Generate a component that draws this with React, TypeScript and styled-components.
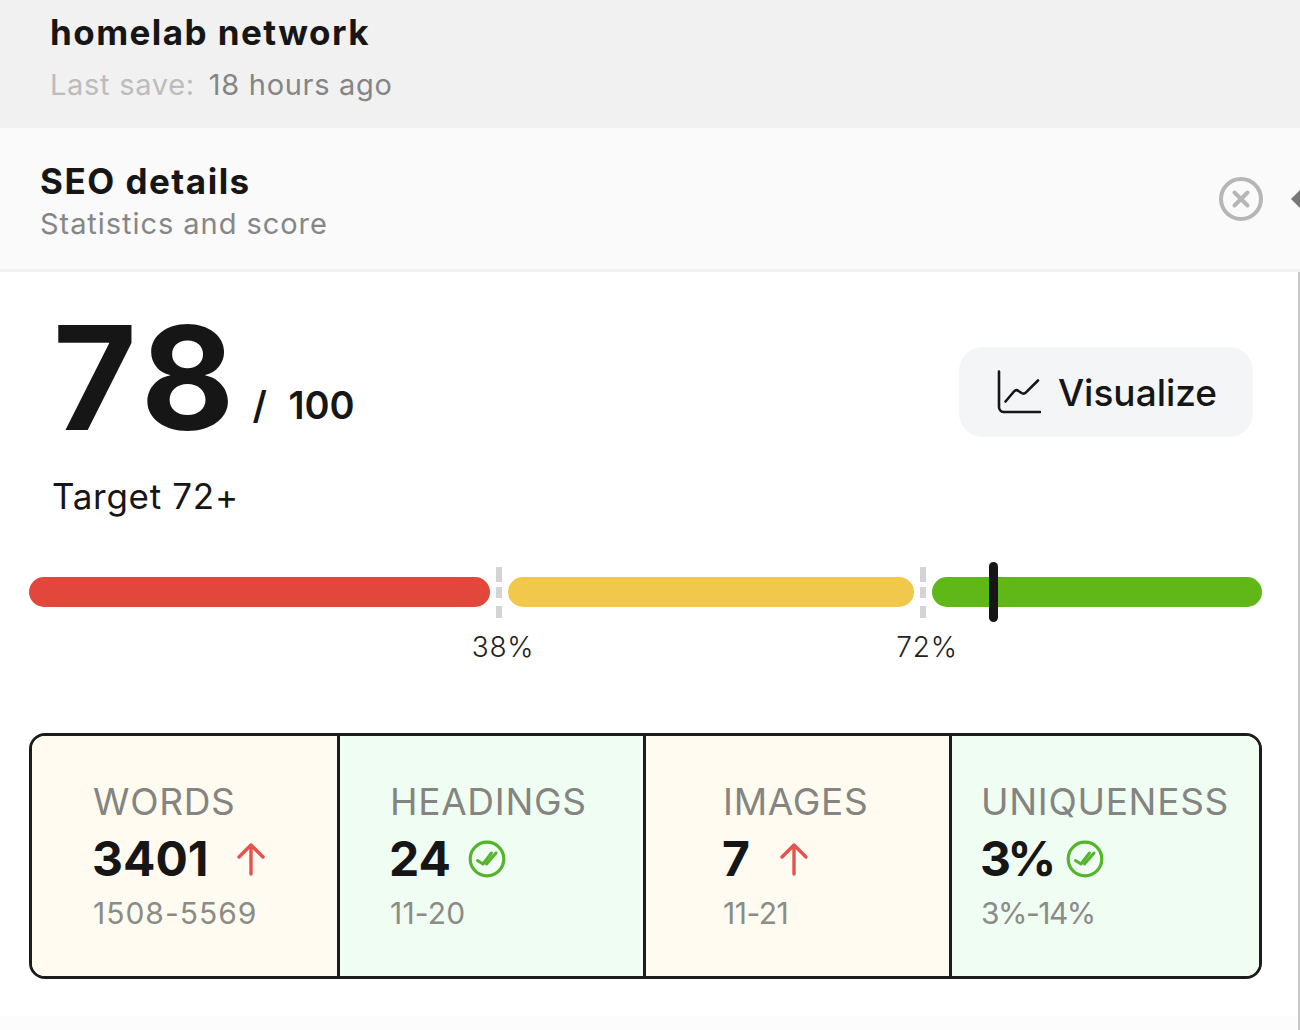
import * as React from "react";
import styled, { createGlobalStyle } from "styled-components";

const GlobalStyle = createGlobalStyle`
  html, body {
    margin: 0;
    padding: 0;
    background: #ffffff;
    font-family: "Inter", "Liberation Sans", sans-serif;
    color: #161616;
  }
`;

const UpArrow: React.FC = () => (
  <svg width="30" height="34" viewBox="0 0 30 34" fill="none">
    <path d="M15 32V3M3 15 15 3l12 12" stroke="#e5534f" strokeWidth="3.4" strokeLinecap="round" strokeLinejoin="round" />
  </svg>
);

const DoubleCheck: React.FC = () => (
  <svg width="38" height="38" viewBox="0 0 38 38" fill="none">
    <circle cx="19" cy="19" r="16.8" stroke="#54b52a" strokeWidth="3.2" />
    <path d="M9.500 20.500l5.500 3.500 8.500-11" stroke="#54b52a" strokeWidth="3" strokeLinecap="round" strokeLinejoin="round" />
    <path d="M18.500 24l9.500-11" stroke="#54b52a" strokeWidth="3" strokeLinecap="round" />
  </svg>
);

const CloseIcon: React.FC = () => (
  <svg width="46" height="46" viewBox="0 0 46 46" fill="none">
    <circle cx="23" cy="23" r="20" stroke="#b6b6b6" strokeWidth="4" />
    <path d="M16.500 16.500l13 13M29.500 16.500l-13 13" stroke="#b6b6b6" strokeWidth="4" strokeLinecap="round" />
  </svg>
);

const ChartIcon: React.FC = () => (
  <svg width="44" height="44" viewBox="0 0 44 44" fill="none">
    <path d="M2 1.500V37a5 5 0 0 0 5 5h36" stroke="#161616" strokeWidth="2.600" strokeLinecap="round" />
    <path d="M8.500 31.500l8.500-10c1.500-1.700 3-1.700 4.500-.5l3 2c1.700 1 3 .8 4.500-.7L41 10.500" stroke="#161616" strokeWidth="2.600" strokeLinecap="round" strokeLinejoin="round" />
  </svg>
);

const stats = [
  { label: "WORDS", value: "3401", range: "1508-5569", tone: "warn", pad: 61, ok: false, gap: 27, spacing: 1, tracking: 0 },
  { label: "HEADINGS", value: "24", range: "11-20", tone: "good", pad: 50, ok: true, gap: 17, spacing: 0.2, tracking: 0 },
  { label: "IMAGES", value: "7", range: "11-21", tone: "warn", pad: 77, ok: false, gap: 29, spacing: -0.5, tracking: 0 },
  { label: "UNIQUENESS", value: "3%", range: "3%-14%", tone: "good", pad: 29, ok: true, gap: 13, spacing: -1.5, tracking: -3.5 },
] as const;

export default function App() {
  return (
    <StyledPage>
      <GlobalStyle />
      <StyledTopBar>
        <StyledDocTitle>homelab network</StyledDocTitle>
        <StyledSaveLine>
          <StyledSaveLabel>Last save:</StyledSaveLabel>
          <span>18 hours ago</span>
        </StyledSaveLine>
      </StyledTopBar>

      <StyledPanelHeader>
        <div>
          <StyledPanelTitle>SEO details</StyledPanelTitle>
          <StyledPanelSubtitle>Statistics and score</StyledPanelSubtitle>
        </div>
        <StyledCloseButton>
          <CloseIcon />
        </StyledCloseButton>
        <StyledHandle />
      </StyledPanelHeader>

      <StyledPanelBody>
        <StyledScoreRow>
          <div>
            <StyledScore>
              <StyledScoreValue>78</StyledScoreValue>
              <StyledScoreMax>/ 100</StyledScoreMax>
            </StyledScore>
            <StyledTarget>Target 72+</StyledTarget>
          </div>
          <StyledVisualize>
            <ChartIcon />
            Visualize
          </StyledVisualize>
        </StyledScoreRow>

        <StyledGauge>
          <StyledSegment $color="#e3473c" $width={461} />
          <StyledTick>
            <StyledTickLabel>38%</StyledTickLabel>
          </StyledTick>
          <StyledSegment $color="#f2c84c" $width={406} />
          <StyledTick>
            <StyledTickLabel>72%</StyledTickLabel>
          </StyledTick>
          <StyledSegment $color="#5fb817" $width={330}>
            <StyledMarker />
          </StyledSegment>
        </StyledGauge>

        <StyledStats>
          {stats.map((s) => (
            <StyledStat key={s.label} $tone={s.tone} $pad={s.pad}>
              <StyledStatLabel>{s.label}</StyledStatLabel>
              <StyledStatValue $gap={s.gap} $tracking={s.tracking}>
                {s.value}
                {s.ok ? <DoubleCheck /> : <UpArrow />}
              </StyledStatValue>
              <StyledStatRange $spacing={s.spacing}>{s.range}</StyledStatRange>
            </StyledStat>
          ))}
        </StyledStats>
      </StyledPanelBody>
    </StyledPage>
  );
}

const StyledPage = styled.div`
  width: 1300px;
  height: 1030px;
  overflow: hidden;
  display: flex;
  flex-direction: column;
`;

const StyledTopBar = styled.header`
  height: 128px;
  box-sizing: border-box;
  padding: 11px 0 0 50px;
  background: #f1f1f1;
`;

const StyledDocTitle = styled.h1`
  margin: 0;
  font-size: 35px;
  line-height: 42px;
  font-weight: 700;
  letter-spacing: 1.45px;
  color: #161616;
`;

const StyledSaveLine = styled.div`
  margin-top: 14px;
  display: flex;
  gap: 14px;
  font-size: 29px;
  line-height: 36px;
  letter-spacing: 0.7px;
  color: #858585;
`;

const StyledSaveLabel = styled.span`
  color: #bcbcbc;
`;

const StyledPanelHeader = styled.div`
  position: relative;
  height: 144px;
  box-sizing: border-box;
  padding: 32px 36px 0 40px;
  display: flex;
  justify-content: space-between;
  background: #fafafa;
  border-bottom: 3px solid #f1f1f1;
`;

const StyledPanelTitle = styled.h2`
  margin: 0;
  font-size: 35px;
  line-height: 43px;
  font-weight: 700;
  letter-spacing: 1.5px;
`;

const StyledPanelSubtitle = styled.div`
  font-size: 29px;
  line-height: 42px;
  letter-spacing: 0.95px;
  color: #868686;
`;

const StyledCloseButton = styled.div`
  margin-top: 16px;
  line-height: 0;
`;

const StyledHandle = styled.span`
  position: absolute;
  right: 0;
  top: 62px;
  width: 9px;
  height: 18px;
  background: #777777;
  clip-path: polygon(0 50%, 100% 0, 100% 100%);
`;

const StyledPanelBody = styled.main`
  flex: 1;
  padding: 0 37px 0 29px;
  border-right: 2px solid #c9c9c9;
  background: linear-gradient(#ffffff calc(100% - 14px), #fcfcfc calc(100% - 14px));
`;

const StyledScoreRow = styled.div`
  height: 290px;
  padding: 36px 8px 0 24px;
  box-sizing: border-box;
  display: flex;
  justify-content: space-between;
  align-items: flex-start;
`;

const StyledScore = styled.div`
  display: flex;
  align-items: flex-end;
  gap: 12px;
`;

const StyledScoreValue = styled.span`
  font-size: 144px;
  line-height: 140px;
  font-weight: 700;
  letter-spacing: 6px;
`;

const StyledScoreMax = styled.span`
  margin-bottom: 20px;
  font-size: 38px;
  line-height: 46px;
  font-weight: 600;
  word-spacing: 12px;
`;

const StyledTarget = styled.div`
  margin-top: 27px;
  margin-left: -1px;
  font-size: 35px;
  line-height: 42px;
  letter-spacing: 0.7px;
`;

const StyledVisualize = styled.div`
  margin-top: 39px;
  width: 294px;
  height: 90px;
  box-sizing: border-box;
  padding-left: 2px;
  display: flex;
  align-items: center;
  justify-content: center;
  gap: 17px;
  background: #f3f5f7;
  border-radius: 24px;
  font-size: 37px;
  font-weight: 500;
`;

const StyledGauge = styled.div`
  width: 1233px;
  height: 60px;
  display: flex;
  align-items: center;
  gap: 6px;
`;

const StyledSegment = styled.div<{ $color: string; $width: number }>`
  position: relative;
  flex: none;
  width: ${(p) => p.$width}px;
  height: 30px;
  border-radius: 15px;
  background: ${(p) => p.$color};
`;

const StyledMarker = styled.span`
  position: absolute;
  left: 57px;
  top: -15px;
  width: 9px;
  height: 60px;
  border-radius: 5px;
  background: #161616;
`;

const StyledTick = styled.div`
  position: relative;
  flex: none;
  width: 6px;
  height: 51px;
  background: linear-gradient(
    #d4d4d4 0 15px,
    transparent 15px 20px,
    #d4d4d4 20px 31px,
    transparent 31px 39px,
    #d4d4d4 39px
  );
`;

const StyledTickLabel = styled.span`
  position: absolute;
  top: 62px;
  left: calc(50% + 4px);
  transform: translateX(-50%);
  font-size: 28px;
  line-height: 36px;
  font-weight: 300;
  letter-spacing: 0.8px;
  color: #222222;
`;

const StyledStats = styled.div`
  margin-top: 111px;
  width: 1233px;
  height: 246px;
  box-sizing: border-box;
  display: grid;
  grid-template-columns: 305px 306px 306px 1fr;
  border: 3px solid #1c1c1c;
  border-radius: 16px;
  overflow: hidden;
`;

const StyledStat = styled.div<{ $tone: "warn" | "good"; $pad: number }>`
  box-sizing: border-box;
  padding: 44px 0 0 ${(p) => p.$pad}px;
  background: ${(p) => (p.$tone === "warn" ? "#fffbf0" : "#f0fdf3")};
  border-left: 3px solid #1c1c1c;

  &:first-child {
    border-left: none;
  }
`;

const StyledStatLabel = styled.div`
  font-size: 37px;
  line-height: 44px;
  letter-spacing: 0.7px;
  color: #848480;
`;

const StyledStatValue = styled.div<{ $gap: number; $tracking: number }>`
  margin-top: 10px;
  margin-left: -1px;
  display: flex;
  align-items: center;
  gap: ${(p) => p.$gap}px;
  font-size: 48px;
  line-height: 50px;
  font-weight: 700;
  letter-spacing: ${(p) => p.$tracking}px;
  color: #161616;
`;

const StyledStatRange = styled.div<{ $spacing: number }>`
  margin-top: 10px;
  font-size: 30px;
  line-height: 38px;
  letter-spacing: ${(p) => p.$spacing}px;
  color: #8b8b87;
`;
